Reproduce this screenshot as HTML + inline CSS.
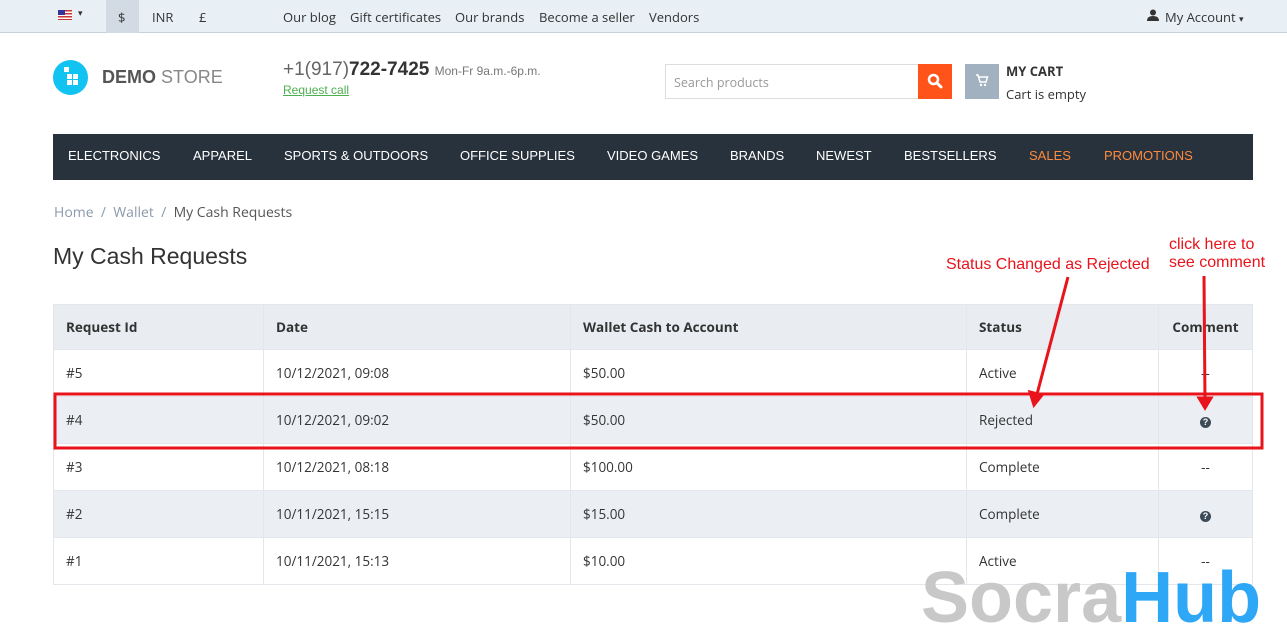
<!DOCTYPE html>
<html><head><meta charset="utf-8">
<style>
*{margin:0;padding:0;box-sizing:border-box}
body{width:1287px;height:631px;overflow:hidden;background:#fff;font-family:"Open Sans","DejaVu Sans","Liberation Sans",sans-serif;color:#333;position:relative}
.a{position:absolute;white-space:nowrap}
.top{position:absolute;left:0;top:0;width:1287px;height:33px;background:#e8eff5;border-bottom:1px solid #c5d2de}
.top .a{font-size:13px;top:8px;color:#333}
.nav{position:absolute;left:53px;top:134px;width:1200px;height:46px;background:#28323d}
.nav span{position:absolute;top:14px;color:#fff;font-family:"Liberation Sans",sans-serif;font-size:13px}
table{position:absolute;left:53px;top:304px;width:1200px;border-collapse:collapse;font-size:13.5px}
td,th{border:1px solid #e3e7eb;padding:0 12px;text-align:left;height:47px}
th{height:45px;background:#e9edf2;font-weight:bold;color:#333}
tr.g td{background:#ebeef3}
td.c,th.c{text-align:center}
.q{display:inline-block;width:11px;height:11px;border-radius:50%;background:#3d4a58;color:#fff;font-size:9px;line-height:11px;text-align:center;font-weight:bold;font-family:"Liberation Sans",sans-serif}
</style></head><body>
<div class="top">
 <div class="a" style="left:58px;top:10px;width:14px;height:10px;background:repeating-linear-gradient(#c33 0 1.5px,#fff 1.5px 3px)"><div style="width:7px;height:5px;background:#339"></div></div>
 <div class="a" style="left:78px;top:6px;font-size:9px">▾</div>
 <div style="position:absolute;left:106px;top:0;width:33px;height:33px;background:#d2dbe4"></div>
 <div class="a" style="left:118px">$</div>
 <div class="a" style="left:152px">INR</div>
 <div class="a" style="left:199px">£</div>
 <div class="a" style="left:283px">Our blog</div>
 <div class="a" style="left:350px">Gift certificates</div>
 <div class="a" style="left:455px">Our brands</div>
 <div class="a" style="left:539px">Become a seller</div>
 <div class="a" style="left:649px">Vendors</div>
 <svg class="a" style="left:1147px;top:9px" width="12" height="12" viewBox="0 0 12 12"><circle cx="6" cy="3.5" r="3" fill="#333"/><path d="M0 12 Q0 7 6 7 Q12 7 12 12Z" fill="#333"/></svg>
 <div class="a" style="left:1165px">My Account <span style="font-size:9px">▾</span></div>
</div>
<div class="a" style="left:53px;top:60px;width:35px;height:35px;border-radius:50%;background:#11c3f1"></div>
<div class="a" style="left:64px;top:67px;width:5px;height:5px;background:#fff"></div>
<div class="a" style="left:67px;top:74px;width:5px;height:5px;background:#fff;box-shadow:6px 0 #fff,0 6px #fff,6px 6px #fff"></div>
<div class="a" style="left:102px;top:67px;font-family:'Liberation Sans',sans-serif;font-size:18px;color:#555"><b>DEMO</b> <span style="color:#888">STORE</span></div>
<div class="a" style="left:283px;top:59px;font-family:'Liberation Sans',sans-serif;font-size:19px;color:#666">+1(917)<b style="color:#333">722-7425</b> <span style="font-size:12px;color:#777">Mon-Fr 9a.m.-6p.m.</span></div>
<div class="a" style="left:283px;top:83px;font-family:'Liberation Sans',sans-serif;font-size:12px;color:#4caf50;text-decoration:underline">Request call</div>
<div class="a" style="left:665px;top:64px;width:254px;height:35px;border:1px solid #ddd;font-size:12.5px;color:#999;padding:9px 8px">Search products</div>
<div class="a" style="left:918px;top:64px;width:34px;height:35px;background:#ff5319"></div>
<svg class="a" style="left:926px;top:72px" width="18" height="18" viewBox="0 0 18 18"><circle cx="7.5" cy="7.5" r="4.5" fill="none" stroke="#fff" stroke-width="2.5"/><path d="M11 11 L15 15" stroke="#fff" stroke-width="3" stroke-linecap="round"/></svg>
<div class="a" style="left:965px;top:64px;width:34px;height:35px;background:#a2b1bf"></div>
<svg class="a" style="left:975px;top:73px" width="14" height="14" viewBox="0 0 14 14"><path d="M1 2h2l2 7h6l1.5-5H4" fill="none" stroke="#fff" stroke-width="1.5"/><circle cx="6" cy="12" r="1.2" fill="#fff"/><circle cx="10" cy="12" r="1.2" fill="#fff"/></svg>
<div class="a" style="left:1006px;top:62px;font-size:13px;font-weight:bold;color:#333">MY CART</div>
<div class="a" style="left:1006px;top:85px;font-size:13px;color:#333">Cart is empty</div>
<div class="nav">
 <span style="left:15px">ELECTRONICS</span><span style="left:140px">APPAREL</span><span style="left:231px">SPORTS &amp; OUTDOORS</span><span style="left:407px">OFFICE SUPPLIES</span><span style="left:554px">VIDEO GAMES</span><span style="left:677px">BRANDS</span><span style="left:763px">NEWEST</span><span style="left:851px">BESTSELLERS</span><span style="left:976px;color:#ff8a3d">SALES</span><span style="left:1051px;color:#ff8a3d">PROMOTIONS</span>
</div>
<div class="a" style="left:54px;top:203px;font-size:14px;color:#8a9aab">Home &nbsp;/&nbsp; Wallet &nbsp;/&nbsp; <span style="color:#555">My Cash Requests</span></div>
<div class="a" style="left:53px;top:243px;font-size:23px;color:#333;font-family:'Liberation Sans',sans-serif">My Cash Requests</div>
<table>
<tr><th style="width:210px">Request Id</th><th style="width:307px">Date</th><th style="width:396px">Wallet Cash to Account</th><th style="width:192px">Status</th><th class="c">Comment</th></tr>
<tr><td>#5</td><td>10/12/2021, 09:08</td><td>$50.00</td><td>Active</td><td class="c">--</td></tr>
<tr class="g"><td>#4</td><td>10/12/2021, 09:02</td><td>$50.00</td><td>Rejected</td><td class="c"><span class="q">?</span></td></tr>
<tr><td>#3</td><td>10/12/2021, 08:18</td><td>$100.00</td><td>Complete</td><td class="c">--</td></tr>
<tr class="g"><td>#2</td><td>10/11/2021, 15:15</td><td>$15.00</td><td>Complete</td><td class="c"><span class="q">?</span></td></tr>
<tr><td>#1</td><td>10/11/2021, 15:13</td><td>$10.00</td><td>Active</td><td class="c">--</td></tr>
</table>
<svg class="a" style="left:0;top:0" width="1287" height="631">
 <rect x="55" y="394" width="1207" height="54" fill="none" stroke="#e8131b" stroke-width="3"/>
 <path d="M1068 277 L1036 398" stroke="#e8131b" stroke-width="3"/>
 <path d="M1030 392 L1034 405 L1042 395Z" fill="#e8131b" stroke="#e8131b" stroke-width="3"/>
 <path d="M1204 276 L1205 402" stroke="#e8131b" stroke-width="3"/>
 <path d="M1199 398 L1205 408 L1211 398Z" fill="#e8131b" stroke="#e8131b" stroke-width="3"/>
 <text x="946" y="269" font-family="Liberation Sans" font-size="16" fill="#e8131b">Status Changed as Rejected</text>
 <text x="1169" y="249" font-family="Liberation Sans" font-size="16" fill="#e8131b">click here to</text>
 <text x="1169" y="267" font-family="Liberation Sans" font-size="16" fill="#e8131b">see comment</text>
 <text x="921" y="622" font-family="Liberation Sans" font-weight="bold" font-size="72" fill="#c8c8c8">Socra<tspan fill="#2ea7f7">Hub</tspan></text>
</svg>
</body></html>
